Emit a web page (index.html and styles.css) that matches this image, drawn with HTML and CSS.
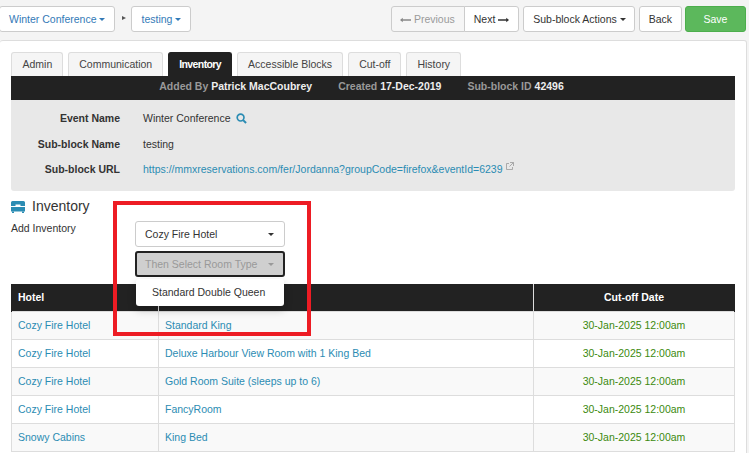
FILE: index.html
```html
<!DOCTYPE html>
<html lang="en">
<head>
<meta charset="utf-8">
<title>Inventory</title>
<link rel="stylesheet" href="styles.css">
</head>
<body>
<header class="toolbar">
  <div class="crumbs">
    <button class="btn btn-link">Winter Conference <span class="caret"></span></button>
    <span class="sep"></span>
    <button class="btn btn-link">testing <span class="caret"></span></button>
  </div>
  <div class="actions">
    <div class="pager">
      <button class="btn btn-off"><svg class="arrow" viewBox="0 0 12 6"><path d="M0 3l3-2.500V2.300h9v1.400H3v1.800z"/></svg> Previous</button>
      <button class="btn">Next <svg class="arrow" viewBox="0 0 12 6"><path d="M12 3L9 .5v1.800H0v1.400h9v1.800z"/></svg></button>
    </div>
    <button class="btn btn-sub">Sub-block Actions <span class="caret"></span></button>
    <button class="btn">Back</button>
    <button class="btn btn-save">Save</button>
  </div>
</header>
<main class="panel">
  <nav class="tabs">
    <a class="tab">Admin</a>
    <a class="tab">Communication</a>
    <a class="tab active">Inventory</a>
    <a class="tab">Accessible Blocks</a>
    <a class="tab">Cut-off</a>
    <a class="tab">History</a>
  </nav>
  <div class="meta">
    <span>Added By <b>Patrick MacCoubrey</b></span>
    <span>Created <b>17-Dec-2019</b></span>
    <span>Sub-block ID <b>42496</b></span>
  </div>
  <section class="details">
    <div class="row"><label>Event Name</label><span>Winter Conference <svg class="search" viewBox="0 0 12 12"><circle cx="5" cy="5" r="3.700" fill="none" stroke="#2b8cb3" stroke-width="1.800"/><path d="M7.800 7.800l3.200 3.200" stroke="#2b8cb3" stroke-width="2.200"/></svg></span></div>
    <div class="row"><label>Sub-block Name</label><span>testing</span></div>
    <div class="row"><label>Sub-block URL</label><span><a class="link">https://mmxreservations.com/fer/Jordanna?groupCode=firefox&amp;eventId=6239</a><svg class="ext" viewBox="0 0 8 8"><path d="M3 1.500H.500v6h6V5M4 .500h3.500V4M7.300.700L3.500 4.500" fill="none" stroke="#999" stroke-width=".8"/></svg></span></div>
  </section>
  <h2 class="title"><svg class="bed" viewBox="0 0 14 12"><path d="M1.500 0h11A1.500 1.500 0 0 1 14 1.500V5H9.500V3.500h-5V5H0V1.500A1.500 1.500 0 0 1 1.500 0z" fill="#2b8cb3"/><path d="M0 6h14v4.500H0z" fill="#2b8cb3"/><path d="M1 10.500h2V12H1zM11 10.500h2V12h-2z" fill="#2b8cb3"/></svg>Inventory</h2>
  <div class="add">
    <div class="add-label">Add Inventory</div>
    <div class="selects">
      <div class="select">Cozy Fire Hotel<span class="caret dark"></span></div>
      <div class="select disabled">Then Select Room Type<span class="caret"></span></div>
      <div class="menu">Standard Double Queen</div>
    </div>
  </div>
  <table>
    <colgroup><col class="c1"><col class="c2"><col class="c3"></colgroup>
    <thead><tr><th>Hotel</th><th></th><th class="center">Cut-off Date</th></tr></thead>
    <tbody>
      <tr><td><a class="link">Cozy Fire Hotel</a></td><td><a class="link">Standard King</a></td><td class="date">30-Jan-2025 12:00am</td></tr>
      <tr><td><a class="link">Cozy Fire Hotel</a></td><td><a class="link">Deluxe Harbour View Room with 1 King Bed</a></td><td class="date">30-Jan-2025 12:00am</td></tr>
      <tr><td><a class="link">Cozy Fire Hotel</a></td><td><a class="link">Gold Room Suite (sleeps up to 6)</a></td><td class="date">30-Jan-2025 12:00am</td></tr>
      <tr><td><a class="link">Cozy Fire Hotel</a></td><td><a class="link">FancyRoom</a></td><td class="date">30-Jan-2025 12:00am</td></tr>
      <tr><td><a class="link">Snowy Cabins</a></td><td><a class="link">King Bed</a></td><td class="date">30-Jan-2025 12:00am</td></tr>
    </tbody>
  </table>
  <div class="highlight"></div>
</main>
</body>
</html>
```
FILE: styles.css
```css
* { box-sizing: border-box; }
html, body { height: 100%; overflow: hidden; }
body {
  margin: 0;
  background: #f4f4f4;
  font: 10.5px/15px "Liberation Sans", Arial, sans-serif;
  color: #333;
}
.toolbar {
  display: flex;
  justify-content: space-between;
  padding: 6px 3px 0 0;
  height: 40px;
}
.crumbs, .actions { display: flex; align-items: flex-start; }
.actions { gap: 4px; }
.crumbs { margin-left: -1px; }
.btn {
  height: 26px;
  padding: 0 9px;
  background: #fff;
  border: 1px solid #ccc;
  border-radius: 3px;
  font: inherit;
  color: #333;
  white-space: nowrap;
}
.btn-link { color: #337ab7; }
.btn-link .caret { border-top-color: #337ab7; }
.btn-off { padding-left: 8px; color: #9a9a9a; background: #f6f6f6; border-radius: 3px 0 0 3px; }
.btn-off .arrow { fill: #888; }
.btn-sub { padding-right: 8px; }
.pager { display: flex; }
.pager .btn + .btn { margin-left: -1px; border-radius: 0 3px 3px 0; }
.btn-save {
  width: 61px;
  margin-left: -1px;
  background: #5cb85c;
  border-color: #4cae4c;
  color: #fff;
}
.arrow { width: 11px; height: 6px; fill: #333; vertical-align: 0; }
.caret {
  display: inline-block;
  vertical-align: 1.500px;
  border-top: 3px solid #333;
  border-left: 3px solid transparent;
  border-right: 3px solid transparent;
}
.sep {
  width: 0;
  height: 0;
  margin: 10px 5px 0 7px;
  border-left: 4px solid #555;
  border-top: 2.500px solid transparent;
  border-bottom: 2.500px solid transparent;
}
.panel {
  position: relative;
  width: 747px;
  height: 420px;
  padding: 11px 11px 0;
  background: #fff;
  border: 1px solid #ddd;
  border-left: 0;
  border-radius: 3px;
}
.tabs { display: flex; gap: 4.500px; height: 24px; }
.tab {
  padding: 4px 10px 0 10.500px;
  background: #f5f5f5;
  border: 1px solid #ddd;
  border-bottom: 0;
  border-radius: 3px 3px 0 0;
  color: #444;
}
.tab.active {
  background: #222;
  border-color: #222;
  color: #fff;
  font-weight: 700;
  letter-spacing: -.6px;
}
.meta {
  display: flex;
  justify-content: center;
  gap: 26px;
  height: 24px;
  padding: 3px 23px 0 0;
  width: 724px;
  background: #222;
  color: #999;
  font-weight: 700;
}
.meta span { white-space: nowrap; }
.meta b { color: #eee; }
.details {
  width: 724px;
  height: 91px;
  padding: 11px 0 0;
  background: #e8e8e8;
  border-radius: 0 0 3px 3px;
}
.row { display: flex; height: 25.500px; align-items: flex-start; }
.row label { width: 109px; margin-right: 23px; text-align: right; font-weight: 700; }
.link { color: #2b8cb3; }
.search { width: 11px; height: 11px; margin-left: 3px; vertical-align: -2px; }
.ext { width: 8px; height: 8px; margin-left: 3px; vertical-align: 3px; }
.title {
  margin: 7px 0 0;
  display: flex;
  align-items: center;
  gap: 7px;
  height: 17px;
  font-size: 14px;
  font-weight: 400;
  line-height: 17px;
}
.bed { width: 14px; height: 12px; }
.add { display: flex; height: 69px; padding-top: 6px; }
.add-label { width: 124px; }
.selects { position: relative; display: flex; flex-direction: column; gap: 4px; width: 150px; }
.select {
  display: flex;
  align-items: center;
  justify-content: space-between;
  height: 26px;
  padding: 0 10px 0 9px;
  background: #fff;
  border: 1px solid #ccc;
  border-radius: 3px;
}
.select.disabled {
  background: #cfcfcf;
  border: 2px solid #222;
  padding: 0 9px 0 8px;
  color: #999;
}
.select.disabled .caret { border-top-color: #999; }
.menu {
  position: absolute;
  z-index: 2;
  top: 58px;
  left: 1px;
  width: 148px;
  height: 27px;
  padding: 6px 0 0 16px;
  background: #fff;
  border-radius: 3px;
  box-shadow: 0 4px 9px rgba(0, 0, 0, .22);
}
table {
  width: 724px;
  table-layout: fixed;
  border-collapse: collapse;
}
.c1 { width: 147px; }
.c3 { width: 201px; }
th {
  height: 27px;
  padding: 0 6px;
  background: #222;
  color: #fff;
  text-align: left;
  font-weight: 700;
  border-left: 1px solid #ddd;
  border-right: 1px solid #ddd;
  border-color: #222 #ddd;
}
th:first-child { border-left-color: #222; }
th:last-child { border-right-color: #222; }
th.center { text-align: center; }
td {
  height: 28px;
  padding: 0 6px;
  border: 1px solid #ddd;
}
tbody tr:nth-child(odd) td { background: #f9f9f9; }
.date { text-align: center; color: #3c8a0e; }
.highlight {
  position: absolute;
  z-index: 3;
  left: 113px;
  top: 160px;
  width: 198px;
  height: 135px;
  border: 4px solid #ed1c24;
  pointer-events: none;
}
```
